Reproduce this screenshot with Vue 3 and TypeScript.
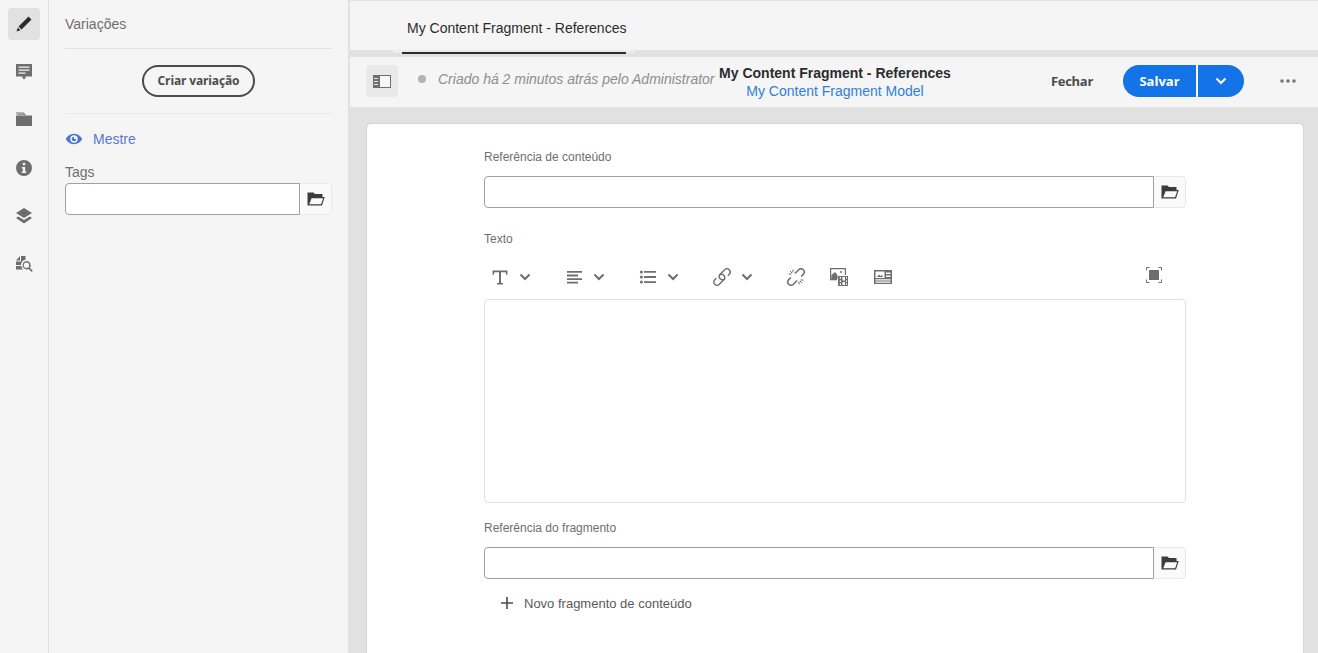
<template>
  <div class="page">
    <nav class="rail">
      <button v-for="(icon, i) in railIcons" :key="i" :class="['rail-btn', { active: i === 0 }]">
        <svg width="18" height="18" viewBox="0 0 18 18"><path :d="icon" fill="#6e6e6e" fill-rule="evenodd" :class="{ dark: i === 0 }" /></svg>
      </button>
    </nav>

    <aside class="panel">
      <div class="panel-title">Variações</div>
      <div class="panel-create">
        <button class="create-btn">Criar variação</button>
      </div>
      <div class="variation">
        <svg width="18" height="18" viewBox="0 0 18 18">
          <path fill="#4b75d1" fill-rule="evenodd" d="M9 3.800C5 3.800 2 6.600.8 9 2 11.400 5 14.200 9 14.200s7-2.800 8.200-5.200C16 6.600 13 3.800 9 3.800zm0 8.900A3.700 3.700 0 1 1 9 5.300a3.700 3.700 0 0 1 0 7.400zM9 6.800A2.200 2.200 0 1 0 11.200 9H9z" />
        </svg>
        <span>Mestre</span>
      </div>
      <label class="tags-label">Tags</label>
      <div class="picker">
        <div class="picker-input"></div>
        <button class="picker-btn">
          <svg width="18" height="18" viewBox="0 0 18 18"><path :d="folderOpen" fill="#3c3c3c" fill-rule="evenodd" /></svg>
        </button>
      </div>
    </aside>

    <main class="main">
      <div class="tabs">
        <div class="tab">My Content Fragment - References</div>
      </div>
      <header class="actionbar">
        <button class="panel-toggle">
          <svg width="18" height="18" viewBox="0 0 18 18">
            <rect x="7" y="3.500" width="10.500" height="12" fill="#f7f7f7" />
            <path fill="#6e6e6e" fill-rule="evenodd" d="M0 3h18v13H0zM7 4v11h10V4zM1 6v1h4V6zm0 3v1h4V9zm0 3v1h4v-1z" />
          </svg>
        </button>
        <span class="status-dot"></span>
        <span class="status">Criado há 2 minutos atrás pelo Administrator</span>
        <div class="heading">
          <div class="heading-title">My Content Fragment - References</div>
          <a class="heading-model">My Content Fragment Model</a>
        </div>
        <button class="close-btn">Fechar</button>
        <div class="save-group">
          <button class="save-btn">Salvar</button>
          <button class="save-more">
            <svg width="12" height="12" viewBox="0 0 12 12"><path d="M1.500 3.500L6 8l4.500-4.500" fill="none" stroke="#fff" stroke-width="2" /></svg>
          </button>
        </div>
        <button class="more-btn">
          <svg width="18" height="6" viewBox="0 0 18 6"><circle cx="3" cy="3" r="1.700" fill="#6e6e6e" /><circle cx="9" cy="3" r="1.700" fill="#6e6e6e" /><circle cx="15" cy="3" r="1.700" fill="#6e6e6e" /></svg>
        </button>
      </header>

      <div class="canvas">
        <section class="card">
          <div class="form">
            <label class="field-label">Referência de conteúdo</label>
            <div class="picker">
              <div class="picker-input"></div>
              <button class="picker-btn">
                <svg width="18" height="18" viewBox="0 0 18 18"><path :d="folderOpen" fill="#3c3c3c" fill-rule="evenodd" /></svg>
              </button>
            </div>

            <label class="field-label text-label">Texto</label>
            <div class="toolbar">
              <span class="tool tool-text">
                <svg width="18" height="18" viewBox="0 0 18 18"><path fill="#6e6e6e" d="M1.500 2.500h15v4.200h-1.300L14.600 4.300H10v10.400l2 .6v1.200H6v-1.200l2-.6V4.300H3.400l-.6 2.400H1.500z" /></svg>
                <svg class="chev" width="12" height="12" viewBox="0 0 12 12"><path :d="chevron" fill="none" stroke="#6e6e6e" stroke-width="2" /></svg>
              </span>
              <span class="tool tool-align">
                <svg width="18" height="18" viewBox="0 0 18 18"><path fill="#6e6e6e" d="M2 3h15v1.800H2zM2 6.600h11v1.800H2zM2 10.200h15v1.800H2zM2 13.800h11v1.800H2z" /></svg>
                <svg class="chev" width="12" height="12" viewBox="0 0 12 12"><path :d="chevron" fill="none" stroke="#6e6e6e" stroke-width="2" /></svg>
              </span>
              <span class="tool tool-list">
                <svg width="18" height="18" viewBox="0 0 18 18"><path fill="#6e6e6e" d="M5 3h12v1.800H5zM5 8.100h12v1.800H5zM5 13.200h12V15H5z" /><circle cx="2.400" cy="3.900" r="1.500" fill="#6e6e6e" /><circle cx="2.400" cy="9" r="1.500" fill="#6e6e6e" /><circle cx="2.400" cy="14.100" r="1.500" fill="#6e6e6e" /></svg>
                <svg class="chev" width="12" height="12" viewBox="0 0 12 12"><path :d="chevron" fill="none" stroke="#6e6e6e" stroke-width="2" /></svg>
              </span>
              <span class="tool tool-link">
                <svg width="18" height="18" viewBox="0 0 18 18">
                  <g fill="none" stroke="#6e6e6e" stroke-width="1.400">
                    <path transform="rotate(-45 12 6)" d="M8.500 9.250a3.250 3.250 0 0 1 0-6.500h6.250a3.250 3.250 0 0 1 0 6.500h-2" />
                    <path transform="rotate(135 6 12)" d="M2.500 15.250a3.250 3.250 0 0 1 0-6.500h6.250a3.250 3.250 0 0 1 0 6.500h-2" />
                  </g>
                </svg>
                <svg class="chev" width="12" height="12" viewBox="0 0 12 12"><path :d="chevron" fill="none" stroke="#6e6e6e" stroke-width="2" /></svg>
              </span>
              <span class="tool tool-unlink">
                <svg width="18" height="18" viewBox="0 0 18 18">
                  <g fill="none" stroke="#6e6e6e" stroke-width="1.500">
                    <path transform="rotate(-45 12 6)" d="M9.500 2.750h5.250a3.250 3.250 0 0 1 0 6.500h-3" />
                    <path transform="rotate(135 6 12)" d="M3.500 8.750h5.250a3.250 3.250 0 0 1 0 6.500h-3" />
                  </g>
                  <path stroke="#6e6e6e" stroke-width="1" d="M1.500 6h3M6 1.500v3M3 3l2 2M16.500 12h-3M12 16.500v-3M15 15l-2-2" />
                </svg>
              </span>
              <span class="tool tool-asset">
                <svg width="20" height="20" viewBox="0 0 20 20"><path fill="#6e6e6e" fill-rule="evenodd" d="M1 1h16v7h-1.200V2.200H2.200V12H8v1.200H1zM2.500 12V8L6 5l2.500 3v4z" /><path fill="#6e6e6e" fill-rule="evenodd" d="M9 9h10v10H9zm1.800 1v1.800h1.200V10zm0 3.200v1.800h1.200v-1.800zm0 3v1.800h1.200v-1.800zM13.500 10v3.500h2.500V10zm0 5v3h2.500v-3zm3.700-5v1.800h.8V10zm0 3.200v1.800h.8v-1.800zm0 3v1.800h.8v-1.800z" /><circle cx="12" cy="5" r="1" fill="#6e6e6e" /></svg>
              </span>
              <span class="tool tool-embed">
                <svg width="18" height="18" viewBox="0 0 18 18"><path fill="#6e6e6e" fill-rule="evenodd" d="M0 2h18v14H0zm1.500 1.500v6.500h9V3.500zm10.500 1v1.400h4.500V4.500zm0 3v1.400h4.500V7.500zm-10.500 3.700v1.300h15v-1.300zm0 2.300v1.200h15v-1.200zM3 9l2-2.500 1.500 1.500L8 7l1 2z" /></svg>
              </span>
              <span class="tool-fullscreen">
                <svg width="18" height="18" viewBox="0 0 18 18"><path fill="none" stroke="#6e6e6e" stroke-width="1" d="M1.500 4.500v-3h3M13.500 1.500h3v3M16.500 13.500v3h-3M4.500 16.500h-3v-3" /><rect x="4" y="4" width="10" height="10" fill="#6e6e6e" /></svg>
              </span>
            </div>
            <div class="editor"></div>

            <label class="field-label fragment-label">Referência do fragmento</label>
            <div class="picker">
              <div class="picker-input"></div>
              <button class="picker-btn">
                <svg width="18" height="18" viewBox="0 0 18 18"><path :d="folderOpen" fill="#3c3c3c" fill-rule="evenodd" /></svg>
              </button>
            </div>
            <button class="new-fragment">
              <svg width="14" height="14" viewBox="0 0 14 14"><path fill="#4b4b4b" d="M6.200 1h1.600v5.200H13v1.600H7.800V13H6.200V7.800H1V6.200h5.200z" /></svg>
              <span>Novo fragmento de conteúdo</span>
            </button>
          </div>
        </section>
      </div>
    </main>
  </div>
</template>

<script setup lang="ts">
const chevron = 'M1.500 3.500L6 8l4.500-4.500'

const folderOpen =
  'M.5 2.500h6l1.500 1.500h7.500v3h2.200L15 15.500H.5zM4.600 8.200L2.200 14.300h11.900l2.100-6.100z'

const railIcons: string[] = [
  'M13.500 1.500l3 3L6.500 14.500l-3-3zM2.800 12.500l2.700 2.700L1.500 16.500z',
  'M1 1h16v12.500h-6.500V15L9 16.500 7.500 15v-1.500H1zM3.500 3.500v1.300h11V3.500zm0 3v1.300h11V6.500zm0 3v1.300h7V9.500z',
  'M1 1.500h7.500L11 4h-9v-.8h7.500L8 2.500H1zM1 4.500h16V15H1z',
  'M9 1a8 8 0 1 1 0 16A8 8 0 0 1 9 1zM7.800 3.800v2.500h2.400V3.800zM6.800 8v1.500h1v3h-1V14h4.400v-1.500h-1V8z',
  'M9 1l8 5-8 5-8-5zM3.300 9.500L9 13l5.700-3.500L17 11l-8 5.500L1 11z',
  'M5 1v4.500H1zM6 1h4.500v3.800A5.500 5.500 0 0 0 6 9.500v.5H1V6.500h5zM1 11h5.500A5.500 5.500 0 0 0 8 14.500H1zM11.500 6a4.200 4.200 0 0 1 3.300 6.800l3 3-1.100 1.100-3-3A4.200 4.200 0 1 1 11.500 6zm0 1.500a2.700 2.700 0 1 0 0 5.400 2.700 2.700 0 0 0 0-5.400z',
]
</script>

<style>
html,
body {
  margin: 0;
  overflow: hidden;
  background: #e1e1e1;
}
</style>

<style scoped>
.page {
  display: flex;
  width: 1318px;
  height: 653px;
  overflow: hidden;
  font-family: "Liberation Sans", Arial, sans-serif;
  color: #4b4b4b;
}

button {
  border: none;
  background: none;
  padding: 0;
  font-family: inherit;
}

/* left rail */
.rail {
  width: 48px;
  flex: none;
  box-sizing: content-box;
  border-right: 1px solid #e1e1e1;
  background: #f5f5f5;
  display: flex;
  flex-direction: column;
  align-items: center;
  gap: 16px;
  padding-top: 8px;
}

.rail-btn {
  width: 32px;
  height: 32px;
  border-radius: 4px;
  display: flex;
  align-items: center;
  justify-content: center;
}

.rail-btn.active {
  background: #e1e1e1;
}

.rail-btn .dark {
  fill: #2c2c2c;
}

/* side panel */
.panel {
  width: 299px;
  flex: none;
  box-sizing: border-box;
  background: #f5f5f5;
  padding: 0 16px;
}

.panel-title {
  height: 48px;
  line-height: 48px;
  font-size: 14px;
  color: #6e6e6e;
  border-bottom: 1px solid #e1e1e1;
}

.panel-create {
  height: 64px;
  display: flex;
  align-items: center;
  justify-content: center;
  border-bottom: 1px solid #e9e9e9;
}

.create-btn {
  width: 113px;
  height: 32px;
  box-sizing: border-box;
  border: 2px solid #4b4b4b;
  border-radius: 16px;
  font-family: "Open Sans", sans-serif;
  font-size: 12px;
  font-weight: 700;
  letter-spacing: -0.15px;
  color: #4b4b4b;
  position: relative;
  top: -0.5px;
}

.variation {
  display: flex;
  align-items: center;
  gap: 10px;
  height: 18px;
  margin-top: 16px;
  font-size: 14px;
  color: #5a76d6;
}

.tags-label {
  display: block;
  margin-top: 15px;
  font-size: 14px;
  line-height: 18px;
  color: #6e6e6e;
}

.picker {
  display: flex;
  height: 32px;
}

.panel .picker {
  margin-top: 2px;
}

.picker-input {
  flex: 1;
  box-sizing: border-box;
  background: #fff;
  border: 1px solid #a0a0a0;
  border-radius: 4px 0 0 4px;
}

.picker-btn {
  width: 32px;
  box-sizing: border-box;
  background: #fafafa;
  border: 1px solid #e9e9e9;
  border-left: none;
  border-radius: 0 4px 4px 0;
  display: flex;
  align-items: center;
  justify-content: center;
}

/* main */
.main {
  flex: 1;
  min-width: 0;
  border-left: 2px solid #e1e1e1;
  display: flex;
  flex-direction: column;
  background: #e1e1e1;
}

.tabs {
  height: 50px;
  box-sizing: border-box;
  background: #f5f5f5;
  border-top: 1px solid #e1e1e1;
  padding-left: 52px;
  margin-bottom: 7px;
  position: relative;
}

/* lighter strip the tab underline sits on */
.tabs::after {
  content: "";
  position: absolute;
  left: 43px;
  top: 49px;
  width: 242px;
  height: 3px;
  background: #ececec;
}

.tab {
  width: 224px;
  height: 53px;
  box-sizing: border-box;
  padding-left: 5px;
  line-height: 54px;
  font-size: 14px;
  white-space: nowrap;
  color: #2c2c2c;
  border-bottom: 2px solid #2c2c2c;
  position: relative;
  z-index: 1;
}

.actionbar {
  height: 50px;
  box-sizing: border-box;
  flex: none;
  background: #f5f5f5;
  display: flex;
  align-items: center;
  padding: 0 0 2px 16px;
}

.panel-toggle {
  width: 32px;
  height: 32px;
  background: #e9e9e9;
  border-radius: 4px;
  display: flex;
  align-items: center;
  justify-content: center;
}

.status-dot {
  width: 8px;
  height: 8px;
  margin-left: 20px;
  border-radius: 50%;
  background: #b3b3b3;
  position: relative;
  top: -2px;
}

.status {
  margin-left: 12px;
  width: 281px;
  font-size: 14px;
  font-style: italic;
  color: #8e8e8e;
  white-space: nowrap;
  position: relative;
  top: -2px;
}

.heading {
  width: 232px;
  margin-top: 2px;
  text-align: center;
  white-space: nowrap;
}

.heading-title {
  font-size: 14px;
  line-height: 18px;
  font-weight: 700;
  color: #2c2c2c;
}

.heading-model {
  display: block;
  font-size: 14px;
  line-height: 18px;
  color: #2f7fdf;
}

.close-btn {
  margin-left: 100px;
  font-family: "Open Sans", sans-serif;
  font-size: 13px;
  font-weight: 700;
  letter-spacing: -0.3px;
  color: #4b4b4b;
}

.save-group {
  display: flex;
  gap: 2px;
  margin-left: 30px;
}

.save-btn {
  width: 73px;
  height: 32px;
  background: #1473e6;
  border-radius: 16px 0 0 16px;
  font-family: "Open Sans", sans-serif;
  font-size: 13px;
  font-weight: 700;
  color: #fff;
}

.save-more {
  width: 46px;
  height: 32px;
  background: #1473e6;
  border-radius: 0 16px 16px 0;
  display: flex;
  align-items: center;
  justify-content: center;
}

.more-btn {
  margin-left: 35px;
  display: flex;
}

/* canvas */
.canvas {
  flex: 1;
  min-height: 0;
  padding: 17px 15px 0 17px;
}

.card {
  height: 600px;
  background: #fff;
  border-radius: 4px 4px 0 0;
  box-shadow: 0 0 2px rgba(0, 0, 0, 0.2);
  padding: 0 117px;
}

.form {
  padding-top: 26px;
}

.field-label {
  display: block;
  font-size: 12px;
  line-height: 14px;
  color: #6e6e6e;
  margin-bottom: 12px;
}

.text-label {
  margin-top: 24px;
  margin-bottom: 0;
}

.toolbar {
  height: 53px;
  display: flex;
  position: relative;
}

.tool {
  position: absolute;
  top: 22px;
  display: flex;
  align-items: center;
  gap: 10px;
}

.tool-text { left: 7px; }
.tool-align { left: 81px; }
.tool-list { left: 155px; }
.tool-link { left: 229px; }
.tool-unlink { left: 303px; }
.tool-asset { left: 345px; top: 21px; }
.tool-embed { left: 390px; }

.tool-fullscreen {
  position: absolute;
  left: 661px;
  top: 20px;
}

.editor {
  height: 204px;
  box-sizing: border-box;
  border: 1px solid #e1e1e1;
  border-radius: 4px;
}

.fragment-label {
  margin-top: 18px;
  margin-bottom: 12px;
}

.new-fragment {
  display: flex;
  align-items: center;
  gap: 10px;
  margin: 16px 0 0 16px;
  height: 16px;
  font-size: 13px;
  color: #5a5a5a;
}
</style>
